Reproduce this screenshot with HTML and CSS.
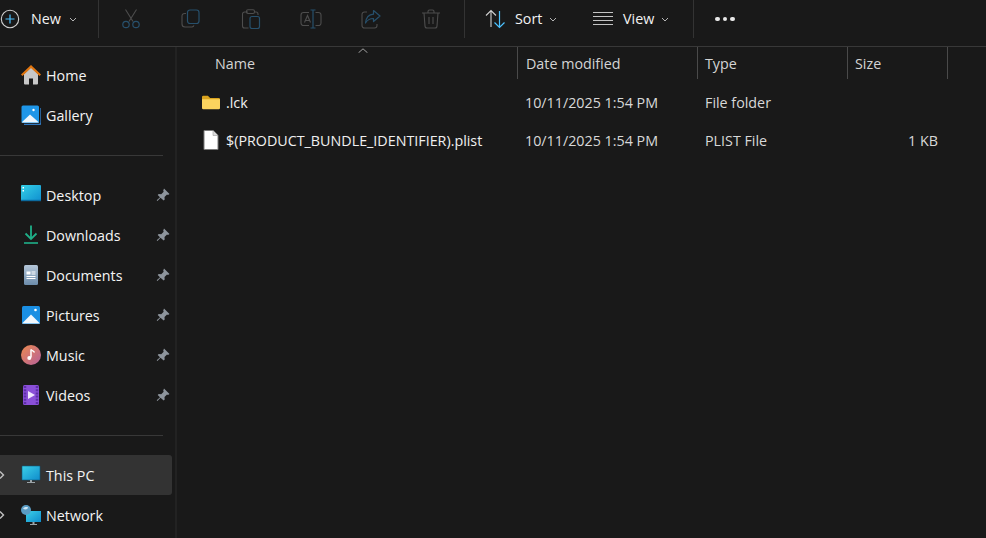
FILE: index.html
```html
<!DOCTYPE html>
<html lang="en">
<head>
<meta charset="utf-8">
<title>File Explorer</title>
<link rel="stylesheet" href="styles.css">
</head>
<body>
<div class="app">
  <header class="toolbar">
    <div class="tb-new">
      <svg class="i20" viewBox="0 0 20 20" fill="none"><circle cx="10" cy="10" r="8.7" stroke="#d0d0d0" stroke-width="1.1"/><path d="M10 5.5v9M5.5 10h9" stroke="#4cc2ff" stroke-width="1.2"/></svg>
      <span class="tb-label new-label">New</span>
      <svg class="chev" viewBox="0 0 8 5" fill="none"><path d="M1 1l3 3 3-3" stroke="#b5b5b5"/></svg>
    </div>
    <div class="tb-sep first-sep"></div>
    <div class="tb-icon"><svg class="i20" viewBox="0 0 20 20" fill="none"><path d="M4.500 0.500l7.500 12M15.500 0.500l-7.500 12" stroke="#4d4d4d" stroke-width="1.100"/><circle cx="5" cy="15.500" r="3.200" stroke="#27506c" stroke-width="1.200"/><circle cx="15" cy="15.500" r="3.200" stroke="#27506c" stroke-width="1.200"/></svg></div>
    <div class="tb-icon"><svg class="i20" viewBox="0 0 20 20" fill="none"><path d="M5 4.500H3.500A2.500 2.500 0 0 0 1 7v8a3 3 0 0 0 3 3h7a2.500 2.500 0 0 0 2-1.500" stroke="#4d4d4d" stroke-width="1.100"/><rect x="6.500" y="1" width="11.500" height="13.500" rx="2.500" stroke="#27506c" stroke-width="1.200"/></svg></div>
    <div class="tb-icon"><svg class="i20" viewBox="0 0 20 20" fill="none"><path d="M7 3H3.500A2 2 0 0 0 1.500 5v12a2 2 0 0 0 2 2h4M14 3h1a2 2 0 0 1 2 2v1" stroke="#4d4d4d" stroke-width="1.100"/><rect x="5.500" y="0.800" width="8" height="3.700" rx="1.500" stroke="#4d4d4d" stroke-width="1.100"/><rect x="9" y="7.500" width="9.500" height="12" rx="2" stroke="#27506c" stroke-width="1.200"/></svg></div>
    <div class="tb-icon"><svg class="i20 wide" viewBox="0 0 22 20" fill="none"><path d="M9 3.500H3.500A2.500 2.500 0 0 0 1 6v8a2.500 2.500 0 0 0 2.500 2.500H9M15.500 3.500H18.500A2.500 2.500 0 0 1 21 6v8a2.500 2.500 0 0 1-2.500 2.500H15.500" stroke="#4d4d4d" stroke-width="1.100"/><path d="M4.500 13.500L7.500 6.500l3 7M5.500 11.500h4" stroke="#4d4d4d" stroke-width="1.100"/><path d="M10.500 1h5M13 1v18M10.500 19h5" stroke="#27506c" stroke-width="1.200"/></svg></div>
    <div class="tb-icon"><svg class="i20" viewBox="0 0 20 20" fill="none"><path d="M6 3H3.500A2.500 2.500 0 0 0 1 5.500v11A2.500 2.500 0 0 0 3.500 19h10a2.500 2.500 0 0 0 2.500-2.500V15" stroke="#4d4d4d" stroke-width="1.100"/><path d="M12.500 1.500l6.500 5.500-6.500 5.500V9.500C9 9.500 6.500 10.500 4.500 14c.5-5 3.500-8.500 8-8.800z" stroke="#27506c" stroke-width="1.200" stroke-linejoin="round"/></svg></div>
    <div class="tb-icon"><svg class="i20" viewBox="0 0 20 20" fill="none"><path d="M1 4h18M7 4V2.500A1.500 1.500 0 0 1 8.500 1h3A1.500 1.500 0 0 1 13 2.500V4M3 4l1 13a2 2 0 0 0 2 2h8a2 2 0 0 0 2-2l1-13M8 8v7M12 8v7" stroke="#4d4d4d" stroke-width="1.100"/></svg></div>
    <div class="tb-sep mid-sep"></div>
    <div class="tb-btn sort-btn">
      <svg class="i20" viewBox="0 0 20 20" fill="none"><path d="M1 6.500L6 1.500l5 5M6 1.500V18" stroke="#d0d0d0" stroke-width="1.100"/><path d="M9.500 13.500l5 5 5-5M14.500 18.500V2" stroke="#4cc2ff" stroke-width="1.200"/></svg>
      <span class="tb-label">Sort</span>
      <svg class="chev" viewBox="0 0 8 5" fill="none"><path d="M1 1l3 3 3-3" stroke="#b5b5b5"/></svg>
    </div>
    <div class="tb-btn view-btn">
      <svg class="i20" viewBox="0 0 20 16" fill="none"><path d="M0 1.500h20M0 5.500h20M0 9.500h20M0 13.500h20" stroke="#c4c4c4" stroke-width="1.200"/></svg>
      <span class="tb-label">View</span>
      <svg class="chev" viewBox="0 0 8 5" fill="none"><path d="M1 1l3 3 3-3" stroke="#b5b5b5"/></svg>
    </div>
    <div class="tb-sep end-sep"></div>
    <div class="tb-more"><i></i><i></i><i></i></div>
  </header>

  <div class="body">
    <nav class="sidebar">
      <div class="nav-row">
        <svg class="nav-icon" viewBox="0 0 20 20"><path d="M3 9L10 2.500 17 9v9.500a1 1 0 0 1-1 1h-4v-6H8v6H4a1 1 0 0 1-1-1z" fill="#c8c8c8"/><path d="M0.700 10.300L10 1.500l9.300 8.800" fill="none" stroke="#e2760f" stroke-width="2.200"/></svg>
        <span class="nav-label">Home</span>
      </div>
      <div class="nav-row">
        <svg class="nav-icon" viewBox="0 0 20 20"><path d="M3 19.500h15a2 2 0 0 0 2-2V3" fill="none" stroke="#2f78c0" stroke-width="1.500"/><rect x="0.500" y="0.500" width="17.500" height="17.500" rx="1.500" fill="#1e96e8"/><path d="M0.500 17.500L9 9.500l9 8z" fill="#eef6fc"/><circle cx="12.500" cy="5" r="1.200" fill="#fff"/></svg>
        <span class="nav-label">Gallery</span>
      </div>
      <div class="nav-divider"></div>
      <div class="nav-row">
        <svg class="nav-icon" viewBox="0 0 20 20"><defs><linearGradient id="desk" x1="0" y1="0" x2="1" y2="1"><stop offset="0" stop-color="#35d0e6"/><stop offset="1" stop-color="#0f8fd0"/></linearGradient></defs><rect x="0" y="0" width="20" height="16" rx="1" fill="url(#desk)"/><rect x="0" y="14.800" width="20" height="1.400" fill="#0b6a9e"/><path d="M1.500 2h1.500v1.500H1.500zM1.500 5h1.500v1.500H1.500z" fill="#fff"/></svg>
        <span class="nav-label">Desktop</span>
        <svg class="pin" viewBox="0 0 14 14"><path d="M8 0.500l5.500 5.500-1.500 1-1-.5-2.500 2.500.2 2.500-1 1L4.500 9.800 1.500 13l-.8-.8L4 9.300 1.700 7l1-1 2.500.2 2.500-2.500-.5-1z" fill="#8d949c"/></svg>
      </div>
      <div class="nav-row">
        <svg class="nav-icon" viewBox="0 0 20 20" fill="none"><path d="M10 0.500v13M4.500 8.500l5.500 5.500 5.500-5.500" stroke="#1fb089" stroke-width="1.800"/><path d="M3 18h14" stroke="#1fb089" stroke-width="1.600"/></svg>
        <span class="nav-label">Downloads</span>
        <svg class="pin" viewBox="0 0 14 14"><path d="M8 0.500l5.500 5.500-1.500 1-1-.5-2.500 2.500.2 2.500-1 1L4.500 9.800 1.500 13l-.8-.8L4 9.300 1.700 7l1-1 2.500.2 2.500-2.500-.5-1z" fill="#8d949c"/></svg>
      </div>
      <div class="nav-row">
        <svg class="nav-icon" viewBox="0 0 20 20"><defs><linearGradient id="doc" x1="0" y1="0" x2="0" y2="1"><stop offset="0" stop-color="#b4c6d8"/><stop offset="1" stop-color="#6c8cab"/></linearGradient></defs><rect x="3" y="0" width="14" height="20" rx="1.500" fill="url(#doc)"/><path d="M5.500 6.500h4v3h-4zM10.500 6.500h4v1h-4zM10.500 8.500h4v1h-4zM5.500 11h9v1h-9zM5.500 13h9v1h-9z" fill="#fff"/></svg>
        <span class="nav-label">Documents</span>
        <svg class="pin" viewBox="0 0 14 14"><path d="M8 0.500l5.500 5.500-1.500 1-1-.5-2.500 2.500.2 2.500-1 1L4.500 9.800 1.500 13l-.8-.8L4 9.300 1.700 7l1-1 2.500.2 2.500-2.500-.5-1z" fill="#8d949c"/></svg>
      </div>
      <div class="nav-row">
        <svg class="nav-icon" viewBox="0 0 20 20"><rect x="1" y="1" width="18" height="18" rx="1.500" fill="#1a8fe3"/><path d="M1 18.500L10 9.500l9 9z" fill="#f1f7fc"/><circle cx="14.500" cy="5" r="1.300" fill="#fff"/></svg>
        <span class="nav-label">Pictures</span>
        <svg class="pin" viewBox="0 0 14 14"><path d="M8 0.500l5.500 5.500-1.500 1-1-.5-2.500 2.500.2 2.500-1 1L4.500 9.800 1.500 13l-.8-.8L4 9.300 1.700 7l1-1 2.500.2 2.500-2.500-.5-1z" fill="#8d949c"/></svg>
      </div>
      <div class="nav-row">
        <svg class="nav-icon" viewBox="0 0 20 20"><defs><linearGradient id="mus" x1="0" y1="0" x2="1" y2="1"><stop offset="0" stop-color="#ec8a4e"/><stop offset="1" stop-color="#b6609c"/></linearGradient></defs><circle cx="10" cy="10" r="10" fill="url(#mus)"/><path d="M10 4.500v8" stroke="#fff" stroke-width="1.500"/><path d="M10 4.500c1 1.500 3 1.500 3.500 3" stroke="#fff" stroke-width="1.300" fill="none"/><circle cx="8.300" cy="13" r="2" fill="#fff"/></svg>
        <span class="nav-label">Music</span>
        <svg class="pin" viewBox="0 0 14 14"><path d="M8 0.500l5.500 5.500-1.500 1-1-.5-2.500 2.500.2 2.500-1 1L4.500 9.800 1.500 13l-.8-.8L4 9.300 1.700 7l1-1 2.500.2 2.500-2.500-.5-1z" fill="#8d949c"/></svg>
      </div>
      <div class="nav-row">
        <svg class="nav-icon" viewBox="0 0 20 20"><rect x="2" y="0" width="16" height="20" rx="1.500" fill="#8a4fd8"/><path d="M4 1v18M16 1v18" stroke="#5d2fa8" stroke-width="2.500" stroke-dasharray="2 1.200"/><path d="M7 6l7 4-7 4z" fill="#f0e6ff"/></svg>
        <span class="nav-label">Videos</span>
        <svg class="pin" viewBox="0 0 14 14"><path d="M8 0.500l5.500 5.500-1.500 1-1-.5-2.500 2.500.2 2.500-1 1L4.500 9.800 1.500 13l-.8-.8L4 9.300 1.700 7l1-1 2.500.2 2.500-2.500-.5-1z" fill="#8d949c"/></svg>
      </div>
      <div class="nav-divider"></div>
      <div class="nav-row tree selected">
        <svg class="tree-chev" viewBox="0 0 5 8" fill="none"><path d="M0 0.500l3.500 3.500L0 7.500" stroke="#c0c0c0" stroke-width="1.400"/></svg>
        <svg class="nav-icon" viewBox="0 0 20 20"><defs><linearGradient id="pc" x1="0" y1="0" x2="1" y2="1"><stop offset="0" stop-color="#3bd0e8"/><stop offset="1" stop-color="#0f8ccc"/></linearGradient></defs><rect x="1" y="1" width="18" height="14" rx="0.500" fill="url(#pc)" stroke="#0d5c80" stroke-width="0.600"/><path d="M9 15h2v2H9zM6 17h8v1H6z" fill="#9aa3a8"/></svg>
        <span class="nav-label">This PC</span>
      </div>
      <div class="nav-row tree">
        <svg class="tree-chev" viewBox="0 0 5 8" fill="none"><path d="M0 0.500l3.500 3.500L0 7.500" stroke="#c0c0c0" stroke-width="1.400"/></svg>
        <svg class="nav-icon" viewBox="0 0 20 20"><defs><linearGradient id="net" x1="0" y1="0" x2="1" y2="1"><stop offset="0" stop-color="#3bd0e8"/><stop offset="1" stop-color="#0f8ccc"/></linearGradient></defs><rect x="5" y="6" width="15" height="11" fill="url(#net)"/><path d="M11.500 17h2v2h-2zM9 19h7v1H9z" fill="#9aa3a8"/><circle cx="5" cy="5" r="5" fill="#5a9cc4"/><path d="M2 3.500c1.500-1.500 4-1.800 5-1 0 1.500-2.500 3-5 1z" fill="#cfe6f4"/></svg>
        <span class="nav-label">Network</span>
      </div>
    </nav>

    <main class="content">
      <div class="grid head">
        <svg class="sort-caret" viewBox="0 0 10 5" fill="none"><path d="M0.500 4.800L5 0.800l4.500 4" stroke="#a0a0a0"/></svg>
        <div class="hcell name-col">Name</div>
        <div class="hcell date-col">Date modified</div>
        <div class="hcell">Type</div>
        <div class="hcell">Size</div>
      </div>
      <div class="grid row row-first">
        <div class="name-cell">
          <svg class="folder-icon" viewBox="0 0 20 16"><path d="M0 2a1.500 1.500 0 0 1 1.500-1.500h5L9 3h9.500A1.500 1.500 0 0 1 20 4.500V6H0z" fill="#d9a31e"/><path d="M0 4.500h20v9.500a1.500 1.500 0 0 1-1.500 1.500h-17A1.500 1.500 0 0 1 0 14z" fill="#fbd35e"/></svg>
          <span class="fname">.lck</span>
        </div>
        <div class="cell">10/11/2025 1:54 PM</div>
        <div class="cell">File folder</div>
        <div class="cell size"></div>
      </div>
      <div class="grid row">
        <div class="name-cell">
          <svg class="file-icon" viewBox="0 0 20 20"><path d="M3 0.500h9l5 5V19.500H3z" fill="#fff" stroke="#7a7a7a"/><path d="M12 0.500v5h5" fill="#dcdcdc" stroke="#9a9a9a" stroke-width="0.600"/></svg>
          <span class="fname">$(PRODUCT_BUNDLE_IDENTIFIER).plist</span>
        </div>
        <div class="cell">10/11/2025 1:54 PM</div>
        <div class="cell">PLIST File</div>
        <div class="cell size">1 KB</div>
      </div>
    </main>
  </div>
</div>
</body>
</html>
```
FILE: styles.css
```css
* { box-sizing: border-box; }
html, body { margin: 0; height: 100%; overflow: hidden; }
body {
  background: #191919;
  color: #e6e6e6;
  font-family: "Open Sans", "Noto Sans", sans-serif;
  font-size: 14.3px;
}
svg { display: block; flex: none; }
.app { width: 986px; height: 538px; display: flex; flex-direction: column; overflow: hidden; }

/* toolbar */
.toolbar {
  height: 47px;
  flex: none;
  display: flex;
  align-items: flex-start;
  border-bottom: 1px solid #383838;
}
.i20 { width: 20px; height: 20px; }
.i20.wide { width: 22px; }
.tb-new { width: 98px; height: 38px; display: flex; align-items: center; }
.tb-label { color: #f2f2f2; line-height: 38px; }
.new-label { margin-left: 11px; width: 38px; }
.chev { width: 8px; height: 5px; }
.tb-sep { width: 1px; height: 38px; background: #333; flex: none; }
.first-sep { margin-right: 2px; }
.mid-sep { margin-left: 3px; }
.tb-icon { width: 60px; height: 38px; display: flex; align-items: center; justify-content: center; }
.tb-btn { height: 38px; display: flex; align-items: center; }
.tb-btn .tb-label { margin-left: 10px; }
.tb-btn .chev { margin-left: 7px; }
.sort-btn { width: 108px; padding-left: 20px; }
.view-btn { width: 120px; padding-left: 20px; }
.tb-more { display: flex; gap: 3px; height: 38px; align-items: center; margin-left: 21px; }
.tb-more i { width: 4.5px; height: 4.500px; border-radius: 50%; background: #e8e8e8; }

/* body */
.body { flex: 1; display: flex; min-height: 0; }
.sidebar {
  width: 177px;
  flex: none;
  padding-top: 8px;
  border-right: 2px solid #222;
}
.nav-row {
  width: 172px;
  height: 40px;
  display: flex;
  align-items: center;
  padding-left: 21px;
  padding-right: 2px;
}
.nav-row.tree { padding-left: 0; }
.nav-row.selected { background: #333; border-radius: 0 3px 3px 0; }
.tree-chev { width: 5px; height: 8px; margin-right: 16px; }
.nav-icon { width: 20px; height: 20px; }
.nav-label { margin-left: 5px; flex: 1; color: #f4f4f4; }
.pin { width: 14px; height: 14px; }
.nav-divider { height: 40px; width: 163px; display: flex; align-items: center; }
.nav-divider::before { content: ""; flex: 1; height: 1px; background: #383838; }

/* file list */
.content { flex: 1; min-width: 0; }
.grid {
  display: grid;
  grid-template-columns: 341px 180px 150px 100px;
}
.head { position: relative; height: 32px; }
.sort-caret { position: absolute; left: 181px; top: 1px; width: 10px; height: 5px; }
.hcell {
  height: 32px;
  line-height: 33px;
  padding-left: 7px;
  border-right: 1px solid #4a4a4a;
  color: #d4d4d4;
}
.hcell.name-col { padding-left: 38px; }
.hcell.date-col { padding-left: 8px; }
.row { height: 38px; align-items: center; color: #d8d8d8; }
.row-first { margin-top: 4px; }
.name-cell { display: flex; align-items: center; padding-left: 24px; }
.file-icon { width: 20px; height: 20px; }
.folder-icon { width: 18px; height: 15px; margin: 0 1px 0 1px; }
.fname { margin-left: 5px; color: #f0f0f0; white-space: nowrap; }
.cell { padding-left: 7px; }
.size { text-align: right; padding-right: 10px; }
```
